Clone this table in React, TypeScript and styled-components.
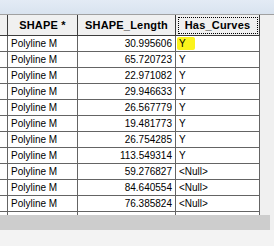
import { Fragment } from 'react';
import styled, { createGlobalStyle } from 'styled-components';

const GlobalStyle = createGlobalStyle`
  html, body {
    margin: 0;
    padding: 0;
    background: #f0f0f0;
  }
  body {
    width: 274px;
    height: 246px;
    overflow: hidden;
    font-family: 'Liberation Sans', Arial, sans-serif;
  }
`;

const rows: [string, string][] = [
  ['30.995606', 'Y'],
  ['65.720723', 'Y'],
  ['22.971082', 'Y'],
  ['29.946633', 'Y'],
  ['26.567779', 'Y'],
  ['19.481773', 'Y'],
  ['26.754285', 'Y'],
  ['113.549314', 'Y'],
  ['59.276827', '<Null>'],
  ['84.640554', '<Null>'],
  ['76.385824', '<Null>'],
  ['', ''],
];

const Page = styled.div`
  display: flex;
  flex-direction: column;
  width: 274px;
  height: 246px;
`;

const TopStrip = styled.div`
  height: 14px;
  background: linear-gradient(#e3ebf5, #d9e3ef);
  border-bottom: 1px solid #a0a0a0;
`;

const Main = styled.div`
  display: flex;
  height: 200px;
`;

const Grid = styled.div`
  display: grid;
  grid-template-columns: 8px 70px 98px 84px;
  grid-auto-rows: 16px;
  grid-template-rows: 21px;
  width: 260px;
  height: 200px;
  overflow: hidden;
  background: #ffffff;
`;

const HeadCell = styled.div<{ $focus?: boolean }>`
  display: flex;
  align-items: center;
  justify-content: center;
  box-sizing: border-box;
  background: #f0f0f0;
  border-right: 1px solid #3c3c3c;
  border-bottom: 1px solid #3c3c3c;
  font-size: 11px;
  font-weight: bold;
  letter-spacing: 0.2px;
  color: #000;
  white-space: nowrap;
  outline: ${(p) => (p.$focus ? '1px dotted #000' : 'none')};
  outline-offset: -3px;
`;

const Cell = styled.div<{ $align?: 'left' | 'right' }>`
  display: flex;
  align-items: center;
  justify-content: ${(p) => (p.$align === 'right' ? 'flex-end' : 'flex-start')};
  box-sizing: border-box;
  padding: 0 3px;
  border-right: 1px solid #646464;
  border-bottom: 1px solid #646464;
  font-size: 10px;
  color: #000;
  white-space: nowrap;
`;

const Highlight = styled.span`
  display: inline-flex;
  align-items: center;
  height: 13px;
  margin-left: -2px;
  padding: 0 9px 0 2px;
  background: #fbf31c;
  border-radius: 2px;
`;

const SideFill = styled.div`
  flex: 1;
  background: #f0f0f0;
`;

const ScrollRow = styled.div`
  display: flex;
  height: 15px;
`;

const ScrollTrack = styled.div`
  width: 270px;
  background: #cdcdcd;
`;

const Bottom = styled.div`
  flex: 1;
  background: #f3f3f3;
`;

export default function App() {
  return (
    <>
      <GlobalStyle />
      <Page>
        <TopStrip />
        <Main>
          <Grid>
            <HeadCell />
            <HeadCell>SHAPE *</HeadCell>
            <HeadCell>SHAPE_Length</HeadCell>
            <HeadCell $focus>Has_Curves</HeadCell>
            {rows.map(([len, curves], i) => (
              <Fragment key={i}>
                <Cell />
                <Cell>{len ? 'Polyline M' : ''}</Cell>
                <Cell $align="right">{len}</Cell>
                <Cell>{i === 0 ? <Highlight>{curves}</Highlight> : curves}</Cell>
              </Fragment>
            ))}
          </Grid>
          <SideFill />
        </Main>
        <ScrollRow>
          <ScrollTrack />
        </ScrollRow>
        <Bottom />
      </Page>
    </>
  );
}
